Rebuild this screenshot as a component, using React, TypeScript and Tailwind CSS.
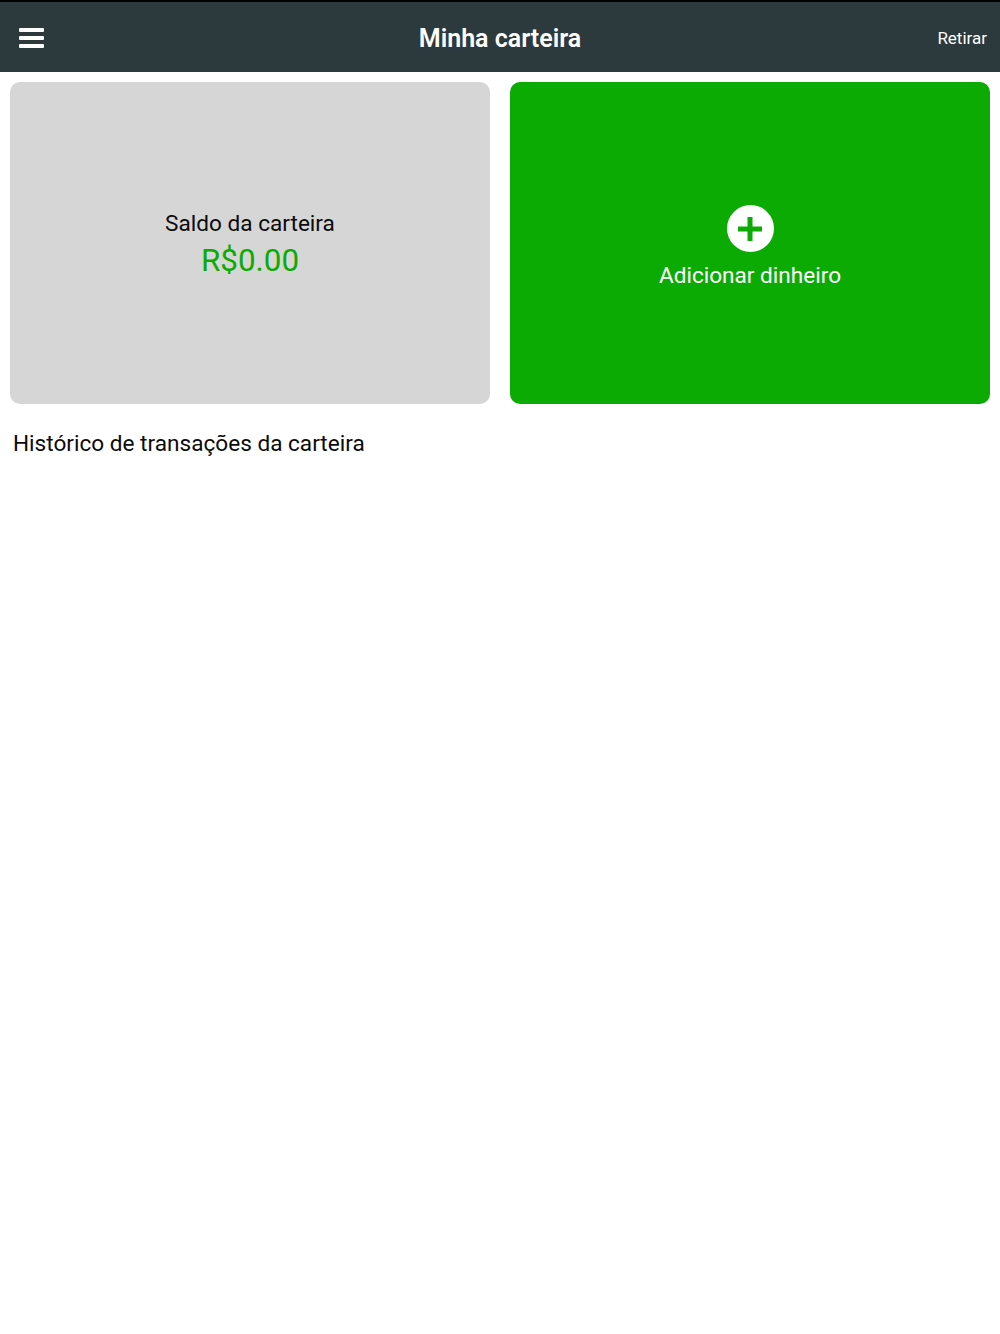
import React from "react";

function MenuIcon() {
  return (
    <div className="mb-[2px] ml-[6px] flex w-[25px] flex-col gap-[3.6px]">
      <div className="h-[4px] rounded-[1px] bg-white" />
      <div className="h-[4px] rounded-[1px] bg-white" />
      <div className="h-[4px] rounded-[1px] bg-white" />
    </div>
  );
}

function PlusIcon() {
  return (
    <div className="flex h-[47px] w-[47px] items-center justify-center rounded-full bg-white">
      <svg width="24" height="24" viewBox="0 0 24 24">
        <path d="M12 0v24M0 12h24" stroke="#0bab04" strokeWidth="5" fill="none" />
      </svg>
    </div>
  );
}

export default function App() {
  return (
    <div className="min-h-[1334px] bg-white font-['Roboto',sans-serif]">
      <header className="grid h-[72px] grid-cols-[1fr_auto_1fr] items-center border-t-2 border-black bg-[#2c393d] px-[13px] pt-[4px] text-white">
        <MenuIcon />
        <h1 className="text-[25px] font-semibold">Minha carteira</h1>
        <button className="justify-self-end text-[17px]">Retirar</button>
      </header>

      <div className="grid grid-cols-2 gap-5 px-[10px] pt-[10px]">
        <div className="flex h-[322px] flex-col items-center rounded-[10px] bg-[#d6d6d6] pt-[127px]">
          <span className="text-[22.6px] leading-[30px] text-[#0b0b0b]">Saldo da carteira</span>
          <span className="mt-[1px] text-[31.4px] leading-[42px] text-[#0bab04]">R$0.00</span>
        </div>
        <button className="flex h-[322px] flex-col items-center rounded-[10px] bg-[#0bab04] pt-[123px] text-white">
          <PlusIcon />
          <span className="mt-[9px] text-[22.6px] leading-[30px]">Adicionar dinheiro</span>
        </button>
      </div>

      <h2 className="pl-[13px] pt-[25px] text-[22.6px] leading-[30px] text-[#0b0b0b]">
        Histórico de transações da carteira
      </h2>
    </div>
  );
}
